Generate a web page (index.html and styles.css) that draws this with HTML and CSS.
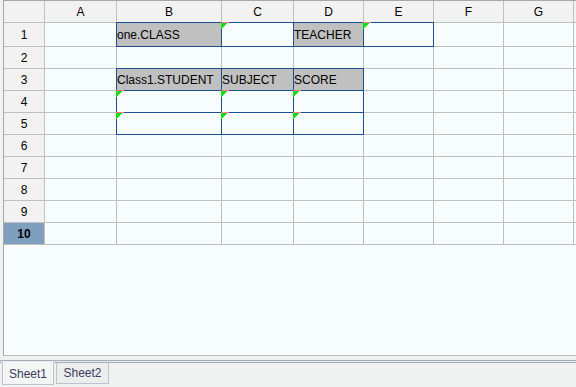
FILE: index.html
```html
<!DOCTYPE html>
<html>
<head>
<meta charset="utf-8">
<link rel="stylesheet" href="styles.css">
</head>
<body>
<div class="sheet">
  <div class="grid">
    <div class="hd corner"></div><div class="hd">A</div><div class="hd">B</div><div class="hd">C</div><div class="hd">D</div><div class="hd">E</div><div class="hd">F</div><div class="hd">G</div><div class="hd"></div>

    <div class="rh">1</div><div class="c"></div><div class="c lab box">one.CLASS</div><div class="c box mk"></div><div class="c lab box">TEACHER</div><div class="c box mk"></div><div class="c"></div><div class="c"></div><div class="c"></div>

    <div class="rh">2</div><div class="c"></div><div class="c"></div><div class="c"></div><div class="c"></div><div class="c"></div><div class="c"></div><div class="c"></div><div class="c"></div>

    <div class="rh">3</div><div class="c"></div><div class="c lab box">Class1.STUDENT</div><div class="c lab box">SUBJECT</div><div class="c lab box">SCORE</div><div class="c"></div><div class="c"></div><div class="c"></div><div class="c"></div>

    <div class="rh">4</div><div class="c"></div><div class="c box mk"></div><div class="c box mk"></div><div class="c box mk"></div><div class="c"></div><div class="c"></div><div class="c"></div><div class="c"></div>

    <div class="rh">5</div><div class="c"></div><div class="c box mk"></div><div class="c box mk"></div><div class="c box mk"></div><div class="c"></div><div class="c"></div><div class="c"></div><div class="c"></div>

    <div class="rh">6</div><div class="c"></div><div class="c"></div><div class="c"></div><div class="c"></div><div class="c"></div><div class="c"></div><div class="c"></div><div class="c"></div>

    <div class="rh">7</div><div class="c"></div><div class="c"></div><div class="c"></div><div class="c"></div><div class="c"></div><div class="c"></div><div class="c"></div><div class="c"></div>

    <div class="rh">8</div><div class="c"></div><div class="c"></div><div class="c"></div><div class="c"></div><div class="c"></div><div class="c"></div><div class="c"></div><div class="c"></div>

    <div class="rh">9</div><div class="c"></div><div class="c"></div><div class="c"></div><div class="c"></div><div class="c"></div><div class="c"></div><div class="c"></div><div class="c"></div>

    <div class="rh sel">10</div><div class="c"></div><div class="c"></div><div class="c"></div><div class="c"></div><div class="c"></div><div class="c"></div><div class="c"></div><div class="c"></div>
  </div>
</div>
<div class="strip"></div>
<div class="tabs">
  <div class="tab active">Sheet1</div>
  <div class="tab">Sheet2</div>
</div>
</body>
</html>
```

FILE: styles.css
```css
html, body {
  margin: 0;
  padding: 0;
}
body {
  width: 576px;
  height: 387px;
  overflow: hidden;
  background: #f0f2f2;
  font-family: "Liberation Sans", Arial, sans-serif;
  font-size: 12px;
  color: #000;
}
.sheet {
  margin-left: 3px;
  height: 354px;
  border-top: 1px solid #a8a8a8;
  border-left: 1px solid #a8a8a8;
  border-bottom: 1px solid #b4bcbc;
  background: #f7fdfd;
  overflow: hidden;
}
.grid {
  display: grid;
  width: max-content;
  grid-template-columns: 40px 71px 104px 71px 69px 69px 69px 69px 69px;
  grid-template-rows: 21px 23px repeat(9, 21px);
  gap: 1px;
  padding-bottom: 1px;
  background: #c0c0c0;
}
.hd, .rh {
  background: #f2f2f2;
  display: flex;
  align-items: center;
  justify-content: center;
}
.rh.sel {
  background: #7f9fbf;
  font-weight: bold;
}
.c {
  background: #f7fdfd;
  position: relative;
  display: flex;
  align-items: center;
  white-space: nowrap;
}
.lab {
  background: #c0c0c0;
}
.box {
  outline: 1px solid #1b4f8e;
}
.mk::before {
  content: "";
  position: absolute;
  left: -1px;
  top: -1px;
  width: 8px;
  height: 8px;
  background:
    linear-gradient(#ff7a8a, #ff7a8a) top left / 8px 1px no-repeat,
    linear-gradient(135deg, #14e014 0 50%, transparent 50%);
}
.strip {
  margin-top: 4px;
  height: 1px;
  border-top: 1px solid #a4aeb4;
  border-bottom: 1px solid #a4aeb4;
  background: #e6eaec;
}
.tabs {
  display: flex;
  gap: 2px;
  padding-left: 2px;
  margin-top: -1px;
  align-items: flex-start;
}
.tab {
  box-sizing: border-box;
  width: 53px;
  height: 22px;
  border: 1px solid #bcc4c8;
  border-top-color: #a4aeb4;
  background: #eceeee;
  color: #3c3c5c;
  display: flex;
  align-items: center;
  justify-content: center;
}
.tab.active {
  width: 52px;
  height: 23px;
  background: #f4f6f6;
  border-top-color: #f4f6f6;
}
```
